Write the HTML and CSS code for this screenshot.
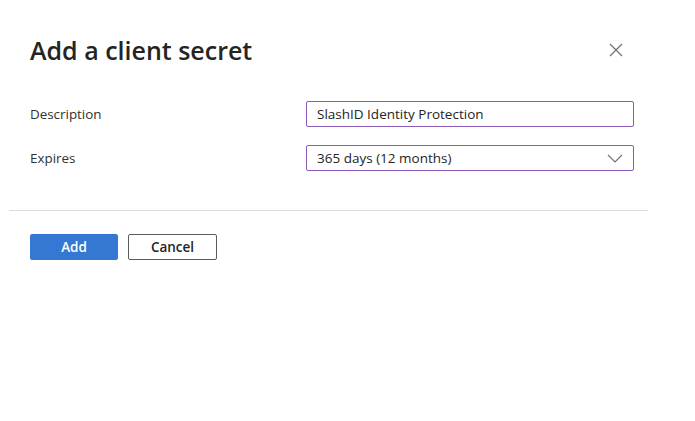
FILE: index.html
```html
<!DOCTYPE html>
<html lang="en">
<head>
<meta charset="utf-8">
<title>Add a client secret</title>
<link rel="stylesheet" href="styles.css">
</head>
<body>
<div class="panel">
  <header class="panel-header">
    <h1 class="title">Add a client secret</h1>
    <button class="close" aria-label="Close">
      <svg width="14" height="14" viewBox="0 0 14 14"><path d="M1 1 L13 13 M13 1 L1 13" stroke="#6f6f6f" stroke-width="1.2" fill="none"/></svg>
    </button>
  </header>
  <div class="form">
    <label class="label">Description</label>
    <div class="field"><span class="field-text">SlashID Identity Protection</span></div>
    <label class="label">Expires</label>
    <div class="field select"><span class="field-text">365 days (12 months)</span>
      <svg class="chev" width="16" height="9" viewBox="0 0 16 9"><path d="M1 1 L8 8 L15 1" stroke="#6f6f6f" stroke-width="1.1" fill="none"/></svg>
    </div>
  </div>
  <div class="divider"></div>
  <footer class="actions">
    <button class="btn primary">Add</button>
    <button class="btn secondary">Cancel</button>
  </footer>
</div>
</body>
</html>
```
FILE: styles.css
```css
html, body {
  margin: 0;
  padding: 0;
  background: #ffffff;
}
body {
  font-family: "Open Sans", "Noto Sans", sans-serif;
  color: #323130;
}
.panel {
  width: 695px;
}
.panel-header {
  display: flex;
  align-items: center;
  justify-content: space-between;
  padding: 33px 70px 0 30px;
  height: 34px;
}
.title {
  margin: 0;
  font-size: 25px;
  font-weight: 600;
  letter-spacing: 0;
  color: #252423;
  line-height: 34px;
}
.close {
  border: 0;
  background: transparent;
  padding: 0;
  width: 18px;
  height: 18px;
  display: flex;
  align-items: center;
  justify-content: center;
}
.form {
  display: grid;
  grid-template-columns: 276px 328px;
  row-gap: 18px;
  align-items: center;
  padding: 34px 30px 0 30px;
}
.label {
  font-size: 13.4px;
  color: #323130;
}
.field {
  box-sizing: border-box;
  height: 26px;
  border: 1px solid #8c5bb9;
  border-radius: 2px;
  display: flex;
  align-items: center;
  padding: 0 10px;
  font-size: 13.5px;
  color: #252423;
}
.select {
  justify-content: space-between;
}
.divider {
  height: 1px;
  background: #dcdcdc;
  margin: 39px 47px 0 9px;
}
.actions {
  display: flex;
  gap: 10px;
  padding: 23px 30px 0 30px;
}
.btn {
  box-sizing: border-box;
  height: 26px;
  border-radius: 2px;
  font-family: "Open Sans", "Noto Sans", sans-serif;
  font-size: 13.5px;
  font-weight: 600;
  padding: 0;
}
.primary {
  width: 88px;
  background: #3478d3;
  color: #ffffff;
  border: 1px solid #3478d3;
}
.secondary {
  width: 89px;
  background: #ffffff;
  color: #252423;
  border: 1px solid #5c5b5a;
}
```
